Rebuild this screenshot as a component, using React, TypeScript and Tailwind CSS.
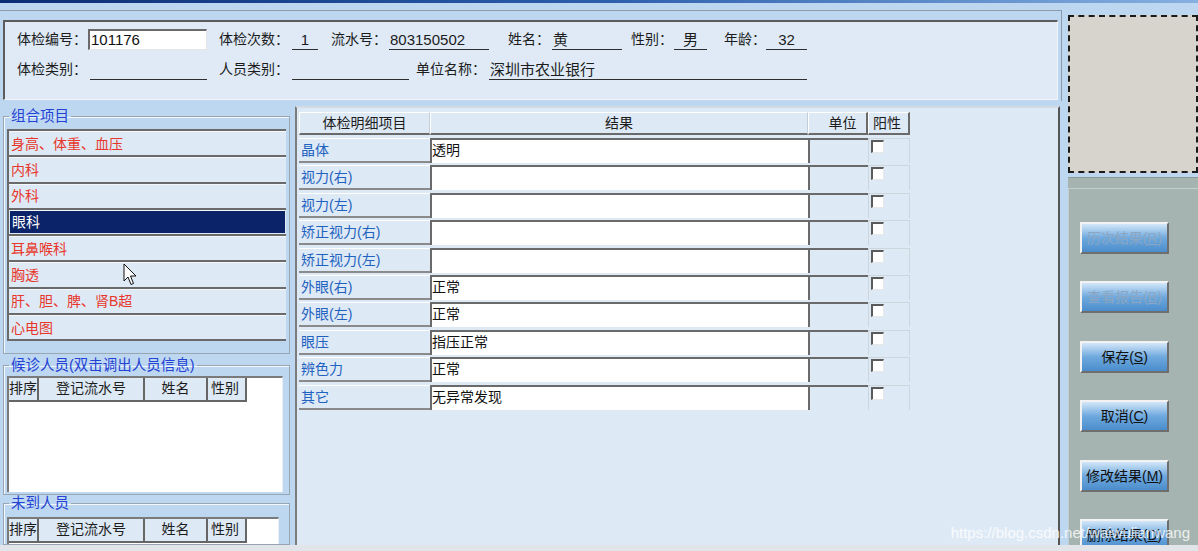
import React from 'react';

const groupItems = ['身高、体重、血压', '内科', '外科', '眼科', '耳鼻喉科', '胸透', '肝、胆、脾、肾B超', '心电图'];

const details = [
  { name: '晶体', result: '透明' },
  { name: '视力(右)', result: '' },
  { name: '视力(左)', result: '' },
  { name: '矫正视力(右)', result: '' },
  { name: '矫正视力(左)', result: '' },
  { name: '外眼(右)', result: '正常' },
  { name: '外眼(左)', result: '正常' },
  { name: '眼压', result: '指压正常' },
  { name: '辨色力', result: '正常' },
  { name: '其它', result: '无异常发现' },
];

const actions = [
  { label: '历次结果', key: 'R', disabled: true },
  { label: '查看报告', key: 'B', disabled: true },
  { label: '保存', key: 'S' },
  { label: '取消', key: 'C' },
  { label: '修改结果', key: 'M' },
  { label: '删除结果', key: 'D' },
];

const Label = ({ text, w }: { text: string; w: string }) => (
  <span className={`${w} shrink-0 whitespace-nowrap text-[14px] leading-[21px] text-[#1c1c1c]`}>{text}</span>
);

const Underlined = ({ value, w, center }: { value?: string; w: string; center?: boolean }) => (
  <span
    className={`${w} shrink-0 h-[20px] border-b border-[#2e2e2e] text-[15px] leading-[19px] text-[#1c1c1c] whitespace-nowrap ${center ? 'text-center' : 'pl-[1px]'}`}
  >
    {value}
  </span>
);

const PeopleTable = ({ h }: { h: string }) => (
  <div className={`${h} bg-white border-t-2 border-l-2 border-[#7a7a7a] border-r border-r-[#e9eef3]`}>
    <div className="flex h-[24px] text-[14px] leading-[20px] text-[#1c1c1c] whitespace-nowrap">
      <div className="w-[30px] bg-[#dde9f5] border-r-2 border-b-2 border-[#666] overflow-hidden">排序</div>
      <div className="w-[106px] bg-[#dde9f5] border-r-2 border-b-2 border-[#666] text-center">登记流水号</div>
      <div className="w-[63px] bg-[#dde9f5] border-r-2 border-b-2 border-[#666] text-center">姓名</div>
      <div className="w-[39px] bg-[#dde9f5] border-r-2 border-b-2 border-[#666] pl-[3px]">性别</div>
    </div>
  </div>
);

const App = () => {
  return (
    <div className="relative w-[1198px] h-[551px] overflow-hidden bg-[#bdd7f1] flex flex-col font-['Liberation_Sans','Noto_Sans_CJK_SC',sans-serif]">
      <div className="h-[3px] bg-linear-to-r from-[#0b2d74] via-[#2d5eac] to-[#86b0e0]" />

      <div className="flex flex-1 min-h-0">
        {/* left and middle */}
        <div className="w-[1062px] flex flex-col">
          <div className="mt-[7px] border-t border-r border-[#8d9ba8] pt-[9px] pl-[3px] pr-[3px] pb-[1px]">
            <div className="h-[80px] bg-[#dfeaf6] border-t-2 border-l-2 border-[#5c5c5c] border-r border-b border-r-[#f2f6fa] border-b-[#f2f6fa] pl-[12px] pt-[7px]">
              <div className="flex items-center h-[21px]">
                <Label text="体检编号：" w="w-[68px]" />
                <div className="ml-[3px] w-[119px] h-[21px] bg-white border-t-2 border-l-2 border-[#6a6a6a] border-r border-b border-r-[#e6e6e6] border-b-[#e6e6e6] pl-[1px] text-[15px] leading-[18px] text-[#111]">
                  101176
                </div>
                <div className="ml-[12px] flex items-center">
                  <Label text="体检次数：" w="w-[71px]" />
                  <Underlined value="1" w="w-[26px] ml-[2px]" center />
                </div>
                <div className="ml-[13px] flex items-center">
                  <Label text="流水号：" w="w-[56px]" />
                  <Underlined value="803150502" w="w-[100px] ml-[2px]" />
                </div>
                <div className="ml-[19px] flex items-center">
                  <Label text="姓名：" w="w-[42px]" />
                  <Underlined value="黄" w="w-[70px] ml-[2px]" />
                </div>
                <div className="ml-[9px] flex items-center">
                  <Label text="性别：" w="w-[41px]" />
                  <Underlined value="男" w="w-[33px] ml-[2px]" center />
                </div>
                <div className="ml-[17px] flex items-center">
                  <Label text="年龄：" w="w-[40px]" />
                  <Underlined value="32" w="w-[41px] ml-[2px]" center />
                </div>
              </div>
              <div className="flex items-center h-[21px] mt-[9px]">
                <Label text="体检类别：" w="w-[68px]" />
                <Underlined w="w-[117px] ml-[5px]" />
                <div className="ml-[12px] flex items-center">
                  <Label text="人员类别：" w="w-[71px]" />
                  <Underlined w="w-[117px] ml-[2px]" />
                </div>
                <div className="ml-[7px] flex items-center">
                  <Label text="单位名称：" w="w-[71px]" />
                  <Underlined value="深圳市农业银行" w="w-[318px] ml-[2px]" />
                </div>
              </div>
            </div>
          </div>

          <div className="flex flex-1 min-h-0 mt-[5px]">
            {/* left panel */}
            <div className="w-[292px] flex flex-col pl-[3px] pr-[2px]">
              <fieldset className="mt-[3px] h-[245px] shrink-0 border border-[#98a6b4] shadow-[inset_1px_1px_0_#f3f8fd] px-[3px] pt-[6px]">
                <legend className="ml-[2px] px-[2px] text-[14.5px] leading-[14px] text-[#2443d4]">组合项目</legend>
                <div className="border-b-2 border-[#6a6a6a]">
                  {groupItems.map((item, i) => (
                    <div
                      key={item}
                      className="h-[26.3px] border-t-2 border-l-2 border-[#6a6a6a] bg-[#dde9f5] flex"
                    >
                      <div
                        className={`flex-1 flex items-center pl-[2px] text-[14px] leading-[16px] border-t border-[#f4f8fc] ${
                          i === 3 ? 'bg-[#0b2469] text-white mx-[1px] mb-[1px]' : 'text-[#e8362b]'
                        }`}
                      >
                        {item}
                      </div>
                    </div>
                  ))}
                </div>
              </fieldset>

              <fieldset className="mt-[4px] h-[137px] shrink-0 border border-[#98a6b4] shadow-[inset_1px_1px_0_#f3f8fd] pl-[3px] pr-[6px] pt-[4px]">
                <legend className="ml-[2px] px-[2px] text-[14.5px] leading-[14px] text-[#2443d4] whitespace-nowrap">候诊人员(双击调出人员信息)</legend>
                <PeopleTable h="h-[116px]" />
              </fieldset>

              <fieldset className="mt-[1px] flex-1 min-h-0 border border-[#98a6b4] shadow-[inset_1px_1px_0_#f3f8fd] pl-[3px] pr-[10px] pt-[7px] overflow-hidden">
                <legend className="ml-[2px] px-[2px] text-[14.5px] leading-[14px] text-[#2443d4]">未到人员</legend>
                <PeopleTable h="h-[40px]" />
              </fieldset>
            </div>

            {/* middle panel */}
            <div className="ml-[3px] w-[765px] border-t-2 border-t-[#d3dce5] border-l-2 border-l-[#7c7c7c] border-r-2 border-r-[#555] bg-[#dde9f5] pt-[4px] pl-[2px]">
              <div className="flex h-[23px] text-[14px] leading-[20px] text-[#1c1c1c]">
                <div className="w-[131px] border-t border-l border-white border-b-2 border-b-[#6a6a6a] border-r border-r-[#c4cdd6] text-center">体检明细项目</div>
                <div className="w-[378px] border-t border-l border-white border-b-2 border-b-[#6a6a6a] border-r border-r-[#c4cdd6] text-center">结果</div>
                <div className="w-[60px] border-t border-l border-white border-b-2 border-b-[#6a6a6a] border-r-2 border-r-[#6a6a6a] text-center pl-[10px]">单位</div>
                <div className="w-[42px] border-t border-l border-white border-b-2 border-b-[#6a6a6a] border-r-2 border-r-[#6a6a6a] pl-[4px]">阳性</div>
              </div>
              <div className="mt-[3px] flex flex-col gap-[2.4px]">
                {details.map((d) => (
                  <div key={d.name} className="flex h-[25px] text-[14px]">
                    <div className="w-[131px] bg-[#dde9f5] border-t border-t-white border-b-2 border-b-[#8a8a8a] pl-[2px] leading-[22px] text-[#1f62c0]">
                      {d.name}
                    </div>
                    <div className="w-[378px] bg-white border-t-2 border-l-2 border-[#6a6a6a] leading-[21px] text-[#111] whitespace-nowrap">
                      {d.result}
                    </div>
                    <div className="w-[60px] bg-[#dde9f5] border-t-2 border-l-2 border-[#6a6a6a]" />
                    <div className="w-[42px] bg-[#dde9f5] border-t border-l border-r border-[#cdd5dd] pl-[2px] pt-[1px]">
                      <div className="w-[13px] h-[13px] bg-white border-t-2 border-l-2 border-[#5a5a5a] border-r border-b border-r-[#e8e8e8] border-b-[#e8e8e8]" />
                    </div>
                  </div>
                ))}
              </div>
            </div>
          </div>
        </div>

        {/* right column */}
        <div className="flex-1 min-h-0 flex flex-col pl-[6px] pt-[12px]">
          <div className="h-[158px] shrink-0 bg-[#d7d4ce] border-2 border-dashed border-[#1a1a1a]" />
          <div className="mt-[4px] flex-1 min-h-0 bg-[#a5b4b1] border-t border-[#8b9997] pt-[10px]">
            <div className="h-full border-t border-l border-[#c3cfcd] pl-[11px] pt-[33px] flex flex-col gap-[27.4px]">
              {actions.map((a) => (
                <button
                  key={a.key}
                  type="button"
                  className={`w-[89px] h-[32px] shrink-0 flex items-center justify-center text-[14px] leading-[16px] bg-linear-to-b from-[#d3e7f8] via-[#6ea9de] to-[#4a8dcc] border-2 border-t-[#f2f2f2] border-l-[#f2f2f2] border-r-[#6e6e6e] border-b-[#6e6e6e] ${
                    a.disabled ? 'text-[#8aa6c2]' : 'text-[#111]'
                  }`}
                >
                  {a.label}(<span className="underline">{a.key}</span>)
                </button>
              ))}
            </div>
          </div>
        </div>
      </div>

      <div className="h-[6px] bg-[#e1e5ea]" />

      {/* mouse cursor */}
      <svg className="absolute left-[123px] top-[263px]" width="16" height="24" viewBox="0 0 16 24">
        <path d="M1 1 L1 18 L5 14 L8 21.5 L10.5 20.5 L7.5 13 L13 13 Z" fill="white" stroke="#111" strokeWidth="1" strokeLinejoin="round" />
      </svg>

      <div className="absolute right-[8px] bottom-[9px] text-[15px] leading-[18px] text-white/80 font-['Liberation_Sans',sans-serif]">
        https://blog.csdn.net/waiwulianwang
      </div>
    </div>
  );
};

export default App;
